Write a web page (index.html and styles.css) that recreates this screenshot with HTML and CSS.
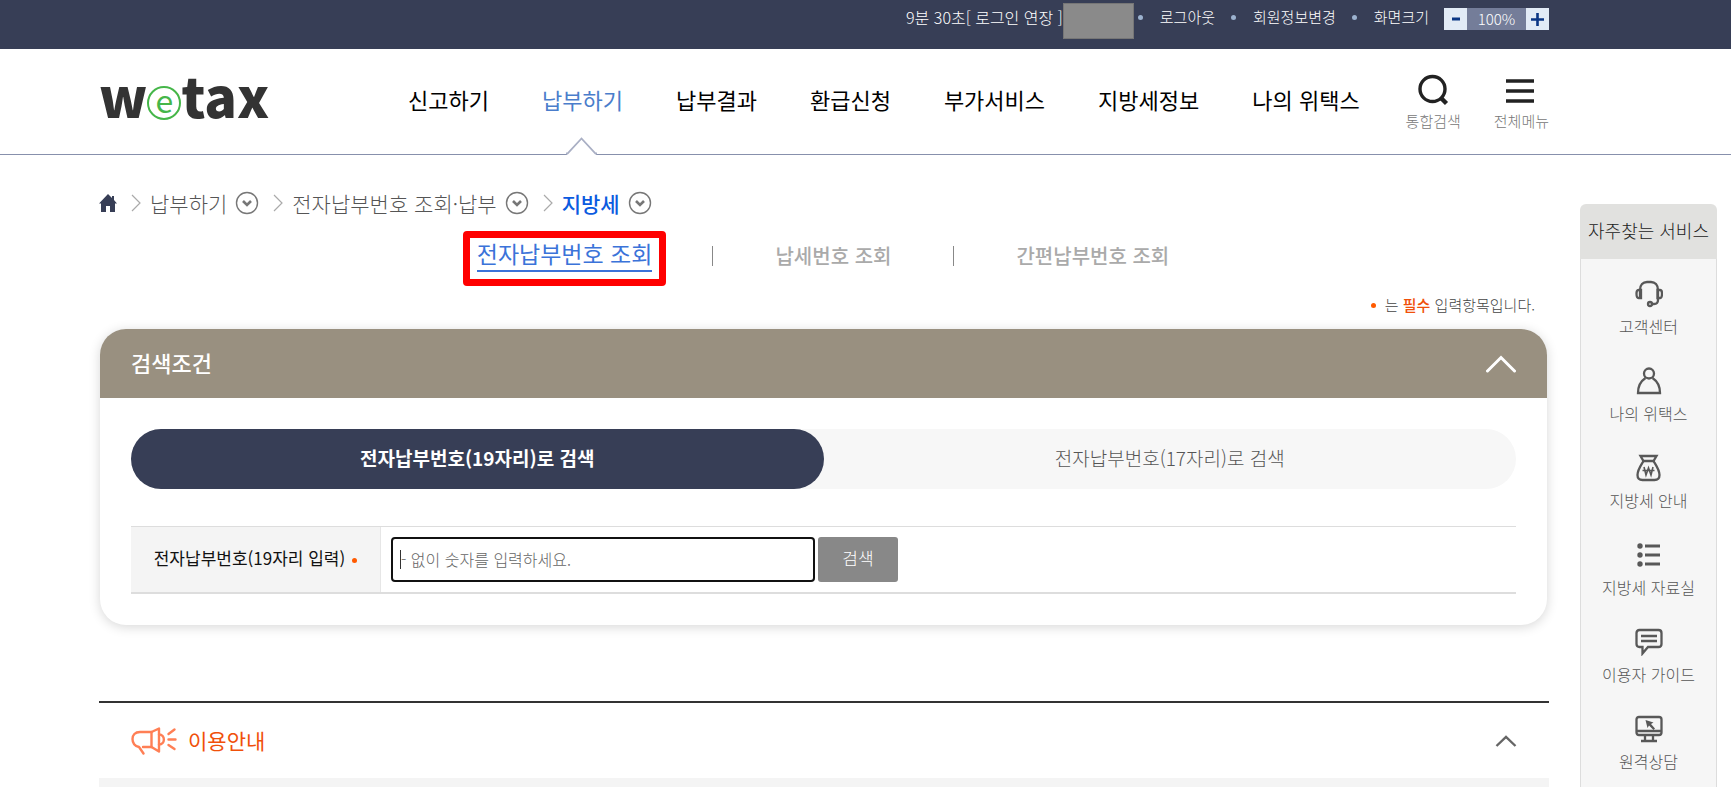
FILE: index.html
```html
<!DOCTYPE html>
<html lang="ko">
<head>
<meta charset="utf-8">
<title>위택스 - 전자납부번호 조회</title>
<link rel="stylesheet" href="styles.css">
</head>
<body>
<div class="topbar">
  <div class="session"><span>9분 30초[ <a href="#">로그인 연장</a> ]</span><span class="user-mask"></span></div>
  <ul class="util">
    <li><a href="#">로그아웃</a></li>
    <li><a href="#">회원정보변경</a></li>
    <li>화면크기</li>
  </ul>
  <div class="zoom">
    <button type="button" aria-label="축소"><svg width="8" height="12" viewBox="0 0 8 12"><path d="M0 6h8" stroke="#0b3684" stroke-width="3"/></svg></button>
    <span>100%</span>
    <button type="button" aria-label="확대"><svg width="13" height="13" viewBox="0 0 13 13"><path d="M0 6.5h13M6.5 0v13" stroke="#0b3684" stroke-width="2.6"/></svg></button>
  </div>
</div>

<header class="header">
  <a class="logo" href="#" aria-label="wetax"><span>w</span><span class="logo-e">e</span><span>tax</span></a>
  <nav>
    <ul class="gnb">
      <li><a href="#">신고하기</a></li>
      <li class="on"><a href="#">납부하기</a>
        <svg class="notch" width="31" height="18" viewBox="0 0 31 18"><path d="M1 16h29v2H1z" fill="#fff"/><path d="M0 16.500h1.500L15.500 1.500 29.500 16.500H31" fill="none" stroke="#a9afc4" stroke-width="1.800"/></svg>
      </li>
      <li><a href="#">납부결과</a></li>
      <li><a href="#">환급신청</a></li>
      <li><a href="#">부가서비스</a></li>
      <li><a href="#">지방세정보</a></li>
      <li><a href="#">나의 위택스</a></li>
    </ul>
  </nav>
  <div class="tools">
    <button type="button"><svg width="32" height="32" viewBox="0 0 32 32" fill="none" stroke="#222" stroke-width="3.400"><circle cx="15.500" cy="15" r="12.500"/><path d="M23.500 23.500l6 6" stroke-width="4.400"/></svg>통합검색</button>
    <button type="button"><svg width="32" height="32" viewBox="0 0 32 32" stroke="#222" stroke-width="3.600"><path d="M1 7h28M1 17h28M1 27h28"/></svg>전체메뉴</button>
  </div>
</header>

<div class="page">
  <main>
    <ol class="crumbs">
      <li><a href="#" aria-label="홈"><svg width="18" height="18" viewBox="0 0 18 18"><path d="M9 0L0 9.500h2V18h5v-6h4v6h5V9.500h2L15 6V2h-2v2z" fill="#373e56"/></svg></a></li>
      <li><svg class="sep" viewBox="0 0 10 18"><path d="M1 1l8 8-8 8"/></svg><a href="#">납부하기</a><button type="button" aria-label="펼치기"><svg class="drop" viewBox="0 0 24 24"><circle cx="12" cy="12" r="10.500"/><path d="M8 10l4 4 4-4"/></svg></button></li>
      <li><svg class="sep" viewBox="0 0 10 18"><path d="M1 1l8 8-8 8"/></svg><a href="#">전자납부번호 조회·납부</a><button type="button" aria-label="펼치기"><svg class="drop" viewBox="0 0 24 24"><circle cx="12" cy="12" r="10.500"/><path d="M8 10l4 4 4-4"/></svg></button></li>
      <li class="here"><svg class="sep" viewBox="0 0 10 18"><path d="M1 1l8 8-8 8"/></svg><a href="#">지방세</a><button type="button" aria-label="펼치기"><svg class="drop" viewBox="0 0 24 24"><circle cx="12" cy="12" r="10.500"/><path d="M8 10l4 4 4-4"/></svg></button></li>
    </ol>

    <ul class="tabs">
      <li class="on"><a href="#">전자납부번호 조회</a></li>
      <li><a href="#">납세번호 조회</a></li>
      <li><a href="#">간편납부번호 조회</a></li>
    </ul>

    <p class="note"><i class="dot"></i><span>는 <strong>필수</strong> 입력항목입니다.</span></p>

    <section class="card">
      <header class="card-head">
        <h2>검색조건</h2>
        <button type="button" aria-label="접기"><svg width="30" height="18" viewBox="0 0 30 18"><path d="M1.500 16L15 2.500 28.500 16" fill="none" stroke="#fff" stroke-width="3" stroke-linecap="round"/></svg></button>
      </header>
      <div class="card-body">
        <div class="switch">
          <button type="button" class="on">전자납부번호(19자리)로 검색</button>
          <button type="button">전자납부번호(17자리)로 검색</button>
        </div>
        <table class="form">
          <tr>
            <th scope="row"><label for="payno">전자납부번호(19자리 입력)</label><i class="dot"></i></th>
            <td><div class="field"><input id="payno" type="text" placeholder="- 없이 숫자를 입력하세요."><button type="button">검색</button></div></td>
          </tr>
        </table>
      </div>
    </section>

    <section class="guide">
      <header class="guide-head">
        <svg width="46" height="28" viewBox="0 0 46 28" fill="none" stroke="#ff7f55" stroke-width="2.400" stroke-linecap="round" stroke-linejoin="round"><path d="M20.500 5H9C4 5 1.500 8 1.500 12c0 4 2.500 7 6.500 8l4.500 6.500M12 20h8.500"/><path d="M20.500 5L28 1.500v23L20.500 20z"/><path d="M28 7.500c6.500 0 6.500 10 0 10M37.500 7l6-4.500M37.500 12.500h7M37.500 18l6 4"/></svg>
        <h2>이용안내</h2>
        <button type="button" aria-label="접기"><svg width="22" height="14" viewBox="0 0 22 14"><path d="M1.500 12L11 3l9.500 9" fill="none" stroke="#666" stroke-width="2.400"/></svg></button>
      </header>
      <div class="guide-body"></div>
    </section>
  </main>

  <aside class="quick">
    <h2>자주찾는 서비스</h2>
    <ul>
      <li><a href="#"><svg viewBox="0 0 28 28"><path d="M5 17V10c0-5 3-8 7-8h4c4 0 7 3 7 8v10c0 3-1.500 4-4 4h-2"/><path d="M5 10H3.500C2 10 1.500 11.500 1.500 13.500S2 18 3.500 18H6v-8zM22.500 10H25c1.500 0 2 1.500 2 3.500S26.500 18 25 18h-2.500z"/><circle cx="15" cy="24" r="2"/></svg>고객센터</a></li>
      <li><a href="#"><svg viewBox="0 0 28 28"><circle cx="14" cy="6.500" r="5"/><path d="M10.500 11C6 14 3 19 3 26h22c0-7-3-12-7.500-15"/></svg>나의 위택스</a></li>
      <li><a href="#"><svg viewBox="0 0 28 28"><path d="M5.500 2h16l-3 5H8.500z"/><path d="M8.500 7c-3 5-6 9-6 14 0 3.500 1.500 5 5 5h12c3.500 0 5-1.500 5-5 0-5-3-9-6-14"/><path d="M9 13l2 8 2.500-7 2.500 7 2-8M7.500 16.500h12" stroke-width="1.600"/></svg>지방세 안내</a></li>
      <li><a href="#"><svg viewBox="0 0 28 28"><path d="M10 5h15M10 14h15M10 23h15" stroke-width="2.800"/><g fill="#585858" stroke="none"><circle cx="5" cy="5" r="2.700"/><circle cx="5" cy="14" r="2.700"/><circle cx="5" cy="23" r="2.700"/></g></svg>지방세 자료실</a></li>
      <li><a href="#"><svg viewBox="0 0 28 28"><path d="M4.500 2h19c2 0 3 1 3 3v11c0 2-1 3-3 3H13l-5.500 6.500V19h-3c-2 0-3-1-3-3V5c0-2 1-3 3-3zM6 8h16M6 13h16"/></svg>이용자 가이드</a></li>
      <li><a href="#"><svg viewBox="0 0 28 28"><path d="M4 2h20c1.500 0 2.500 1 2.500 2.500v13c0 1.500-1 2.500-2.500 2.500H4c-1.500 0-2.500-1-2.500-2.500v-13C1.500 3 2.500 2 4 2zM2 16h24M10 20v5M18 20v5M6 26h16"/><path d="M10.500 5l8 2.500-2.500 1.500 4 4.500-1.500 1.500-4.500-4.500-1.500 2.500z" fill="#585858" stroke="none"/></svg>원격상담</a></li>
    </ul>
  </aside>
</div>
</body>
</html>
```

FILE: styles.css
```css
* { box-sizing: border-box; }

body {
  margin: 0;
  min-height: 100vh;
  display: flex;
  flex-direction: column;
  background: #fff;
  color: #333;
  font-family: "Noto Sans CJK KR", sans-serif;
  font-size: 16px;
  line-height: 24px;
}

ul, ol, p, h2 { margin: 0; padding: 0; list-style: none; }
h2 { font-weight: 500; }
a { color: inherit; text-decoration: none; }
button { margin: 0; padding: 0; border: 0; background: none; color: inherit; font: inherit; cursor: pointer; }
svg { display: block; flex: none; }

.dot { display: inline-block; width: 5px; height: 5px; border-radius: 50%; background: #ff5a00; }

/* Top bar */
.topbar {
  display: flex;
  justify-content: flex-end;
  align-items: flex-start;
  height: 49px;
  padding: 3px 182px 0 99px;
  background: #373e56;
  color: #fff;
  font-size: 15px;
  line-height: 28px;
  font-weight: 300;
  white-space: nowrap;
}
.session { display: flex; font-size: 16px; }
.user-mask { width: 71px; height: 36px; background: #8a8a8a; border: 1px solid #767676; }
.util { display: flex; }
.util li { display: flex; align-items: center; }
.util li::before { content: ""; width: 5px; height: 5px; margin: 0 17px 0 16px; border-radius: 50%; background: #9cb2cf; }
.util li:first-child::before { margin-left: 4px; }
.zoom { display: flex; height: 22px; margin: 5px 0 0 15px; background: #747d99; line-height: 22px; }
.zoom span { width: 59px; text-align: center; }
.zoom button { display: flex; align-items: center; justify-content: center; width: 23px; background: #e2ebf6; }

/* Header */
.header {
  display: flex;
  height: 106px;
  padding: 0 182px 0 99px;
  border-bottom: 1px solid #8790ac;
  white-space: nowrap;
}
.logo {
  display: flex;
  align-items: center;
  width: 165px;
  height: 92px;
  margin-right: 144px;
  color: #333;
  font-weight: 900;
  font-size: 54px;
}
.logo-e {
  flex: none;
  width: 34px;
  height: 34px;
  margin-top: 16px;
  border: 2px solid #45b649;
  border-radius: 50%;
  color: #45b649;
  font-size: 32px;
  font-weight: 400;
  line-height: 22px;
  text-align: center;
}
.gnb { display: flex; gap: 53px; height: 106px; color: #000; font-size: 22px; line-height: 100px; font-weight: 400; }
.gnb li { position: relative; }
.gnb .on { color: #4a7dcb; }
.notch { position: absolute; bottom: 0; left: 50%; margin-left: -16px; }
.tools { display: flex; gap: 33px; margin-left: auto; padding-top: 25px; color: #777; font-size: 15px; line-height: 22px; font-weight: 300; }
.tools button { display: flex; flex-direction: column; align-items: center; gap: 4px; height: 60px; }

/* Page */
.page {
  flex: 1;
  display: grid;
  grid-template-columns: minmax(0, 1fr) 137px;
  gap: 31px;
  padding: 0 14px 0 99px;
}
main { display: flex; flex-direction: column; padding-top: 34px; }

.crumbs { display: flex; align-items: center; gap: 14px; height: 28px; color: #555; font-size: 21px; line-height: 28px; font-weight: 300; white-space: nowrap; }
.crumbs li { display: flex; align-items: center; }
.crumbs .here { color: #0b5be0; font-weight: 500; }
.sep { width: 10px; height: 18px; margin-right: 9px; fill: none; stroke: #aaa; stroke-width: 1.2; }
.drop { width: 24px; height: 24px; margin-left: 8px; fill: none; stroke: #777; stroke-width: 1.4; }
.drop path { stroke-width: 2.6; }

.tabs { display: flex; align-items: center; justify-content: center; margin: 14px 16px 0 0; color: #aaa; font-size: 20px; line-height: 30px; font-weight: 500; white-space: nowrap; }
.tabs li { display: flex; align-items: center; height: 55px; padding-bottom: 6px; }
.tabs li + li::before { content: ""; width: 1px; height: 20px; margin: 0 62px; background: #888; }
.tabs li:nth-child(2)::before { margin-left: 46px; }
.tabs .on { align-items: flex-start; padding: 0 7px; border: 7px solid #f00; border-radius: 4px; color: #3b73d9; font-size: 23px; font-weight: 400; }
.tabs .on a { height: 34px; border-bottom: 2px solid #3b73d9; }

.note { display: flex; align-items: center; justify-content: flex-end; gap: 9px; margin-top: 7px; padding-right: 14px; color: #444; font-size: 15px; line-height: 24px; font-weight: 300; }
.note strong { color: #f0500a; font-weight: 500; }

/* Search card */
.card { margin: 12px 2px 0 1px; border-radius: 26px; overflow: hidden; background: #fff; box-shadow: 0 2px 12px rgba(0, 0, 0, 0.16); }
.card-head { display: flex; align-items: center; justify-content: space-between; height: 69px; padding: 0 31px; background: #999080; color: #fff; }
.card-head h2 { padding-bottom: 3px; font-size: 22px; }
.card-body { padding: 31px; }
.switch { display: flex; height: 60px; border-radius: 30px; background: #f7f7f7; }
.switch button { flex: 1; padding-bottom: 2px; border-radius: 30px; color: #555; font-size: 19px; font-weight: 300; }
.switch .on { background: #373e56; color: #fff; font-weight: 700; }
.form { width: 100%; margin-top: 37px; border-collapse: separate; border-spacing: 0; border-top: 1px solid #ddd; border-bottom: 2px solid #ddd; }
.form th { width: 250px; padding: 0 0 3px; border-right: 1px solid #e6e6e6; background: #f4f4f4; color: #111; font-size: 17px; font-weight: 400; white-space: nowrap; }
.form th .dot { margin-left: 7px; vertical-align: middle; }
.form td { padding: 10px; }
.field { display: flex; gap: 3px; }
.field input {
  flex: 0 1 424px;
  min-width: 0;
  height: 45px;
  padding: 0 8px 2px;
  border: 2px solid #111;
  border-radius: 4px;
  background: linear-gradient(#333, #333) 7px center / 1px 19px no-repeat #fff;
  font: 300 16px "Noto Sans CJK KR", sans-serif;
}
.field input::placeholder { color: #666; opacity: 1; }
.field button { width: 80px; height: 45px; padding-bottom: 3px; border-radius: 3px; background: #888; color: #fff; font-size: 17px; font-weight: 300; }

/* Guide */
.guide { flex: 1; display: flex; flex-direction: column; margin-top: 76px; border-top: 2px solid #333; }
.guide-head { display: flex; align-items: center; gap: 11px; height: 75px; padding: 0 32px; }
.guide-head h2 { padding-bottom: 2px; color: #f0500a; font-size: 21px; font-weight: 400; }
.guide-head button { margin-left: auto; }
.guide-body { flex: 1; background: #f4f4f4; }

/* Quick menu */
.quick { display: flex; flex-direction: column; margin-top: 49px; white-space: nowrap; text-align: center; }
.quick h2 { height: 55px; border-radius: 6px 6px 0 0; background: #e1e1df; color: #222; font-size: 18px; line-height: 52px; font-weight: 300; }
.quick ul { flex: 1; display: flex; flex-direction: column; gap: 29px; padding-top: 21px; border: 1px solid #ddd; border-width: 0 1px; background: #f6f6f6; color: #555; font-weight: 300; }
.quick a { display: flex; flex-direction: column; align-items: center; gap: 6px; }
.quick svg { width: 28px; height: 28px; fill: none; stroke: #585858; stroke-width: 2.3; }
```
